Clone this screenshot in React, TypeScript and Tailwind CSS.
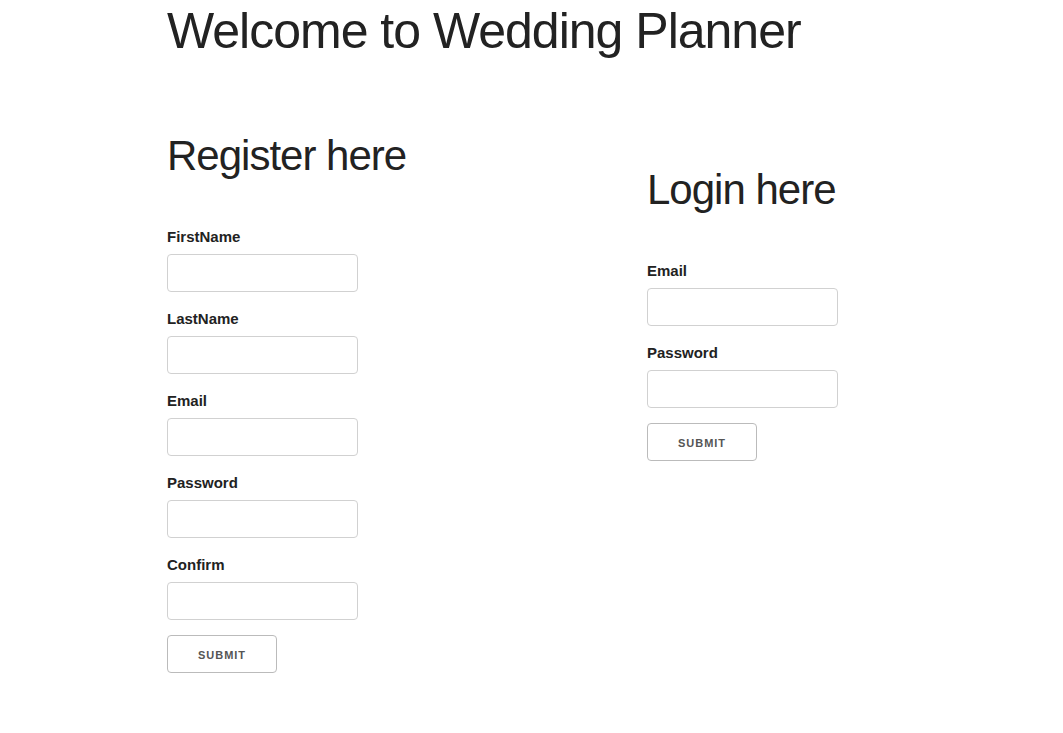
import React from "react";

const Field: React.FC<{ label: string; type?: string }> = ({ label, type = "text" }) => (
  <div>
    <label className="block text-[15px] leading-[24px] font-bold text-[#222] mb-[5px]">{label}</label>
    <input
      type={type}
      className="block w-[191px] h-[38px] px-[10px] py-[6px] mb-[15px] bg-white border border-[#d1d1d1] rounded-[4px] outline-none"
    />
  </div>
);

const SubmitButton: React.FC = () => (
  <button
    type="submit"
    className="h-[38px] w-[110px] border border-[#bbb] rounded-[4px] bg-transparent text-[#555] text-[11px] font-bold uppercase tracking-[1px] leading-[38px] text-center"
  >
    Submit
  </button>
);

export default function App() {
  return (
    <div className="min-h-screen bg-white text-[#222] font-['Liberation_Sans',Arial,sans-serif]">
      <div className="pl-[167px]">
        <h1 className="pt-[1px] text-[50px] leading-[60px] tracking-[-1px] font-normal mb-[19px]">
          Welcome to Wedding Planner
        </h1>

        <div className="flex pt-[50px]">
          {/* Register */}
          <div className="w-[480px]">
            <h2 className="text-[42px] leading-[52.5px] tracking-[-1px] font-normal mb-[42px]">Register here</h2>
            <form>
              <Field label="FirstName" />
              <Field label="LastName" />
              <Field label="Email" type="email" />
              <Field label="Password" type="password" />
              <Field label="Confirm" type="password" />
              <SubmitButton />
            </form>
          </div>

          {/* Login */}
          <div className="pt-[34px]">
            <h2 className="text-[42px] leading-[52.5px] tracking-[-1px] font-normal mb-[42px]">Login here</h2>
            <form>
              <Field label="Email" type="email" />
              <Field label="Password" type="password" />
              <SubmitButton />
            </form>
          </div>
        </div>
      </div>
    </div>
  );
}
